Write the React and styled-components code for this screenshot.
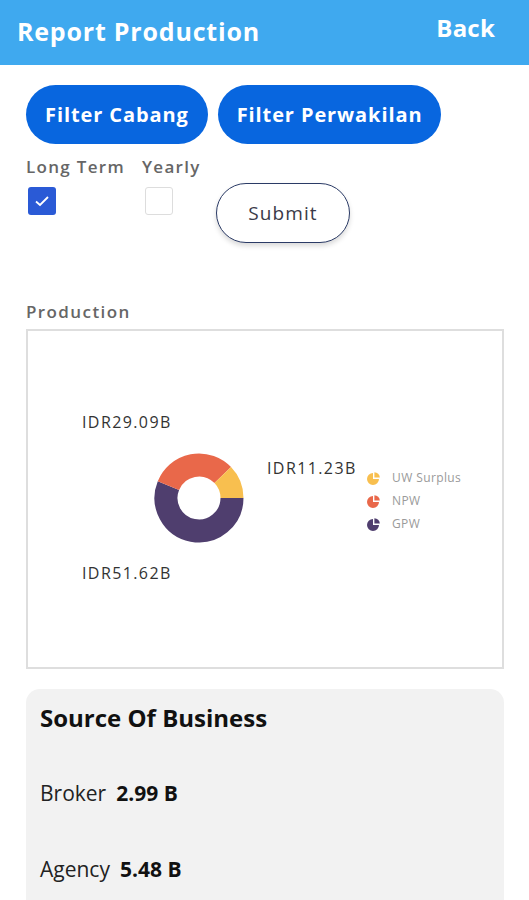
import React from 'react';
import styled, { createGlobalStyle } from 'styled-components';

const GlobalStyle = createGlobalStyle`
  body {
    margin: 0;
    background: #fff;
    font-family: 'Open Sans', 'Noto Sans', sans-serif;
  }
`;

const Page = styled.div`
  width: 529px;
  height: 900px;
  overflow: hidden;
`;

const Header = styled.header`
  display: flex;
  justify-content: space-between;
  align-items: center;
  height: 65px;
  padding: 0 34px 3px 17px;
  box-sizing: border-box;
  background-color: #3fa9ef;
  color: #fff;
  font-weight: 700;
`;

const Title = styled.span`
  font-size: 25px;
  letter-spacing: 0.8px;
`;

const Back = styled.span`
  align-self: flex-start;
  padding-top: 11px;
  font-size: 24px;
  letter-spacing: 0.2px;
`;

const Body = styled.main`
  padding: 20px 25px 0 26px;
`;

const ButtonRow = styled.div`
  display: flex;
  gap: 10px;
`;

const FilterButton = styled.button`
  height: 59px;
  padding: 0 19px;
  border: none;
  border-radius: 30px;
  background-color: #0866df;
  color: #fff;
  font-family: inherit;
  font-size: 20px;
  font-weight: 700;
  letter-spacing: 0.9px;
`;

const Options = styled.div`
  display: flex;
  align-items: flex-start;
  margin-top: 12px;
`;

const CheckGroup = styled.label`
  display: flex;
  flex-direction: column;
  width: ${(p) => p.width}px;
  color: #666;
  font-size: 17px;
  font-weight: 600;
  line-height: 22px;
  letter-spacing: 1.3px;
`;

const Box = styled.span`
  display: flex;
  align-items: center;
  justify-content: center;
  width: 28px;
  height: 28px;
  margin: 9px 0 0 ${(p) => (p.checked ? 2 : 3)}px;
  box-sizing: border-box;
  border-radius: 3px;
  background-color: ${(p) => (p.checked ? '#2a5ad6' : '#fff')};
  border: ${(p) => (p.checked ? 'none' : '1.5px solid #ddd')};
`;

const SubmitButton = styled.button`
  width: 134px;
  height: 60px;
  margin: 27px 0 0 16px;
  border: 1.5px solid #2b3b66;
  border-radius: 30px;
  background-color: #fff;
  box-shadow: 0 3px 5px rgba(0, 0, 0, 0.15);
  color: #3a3a48;
  font-family: inherit;
  font-size: 19px;
  letter-spacing: 1.1px;
`;

const SectionLabel = styled.div`
  margin-top: 58px;
  color: #666;
  font-size: 17px;
  font-weight: 600;
  line-height: 22px;
  letter-spacing: 1.4px;
`;

const ChartBox = styled.div`
  width: 478px;
  height: 340px;
  margin-top: 6px;
  box-sizing: border-box;
  border: 2px solid #dedede;

  svg {
    display: block;
  }
`;

const Card = styled.section`
  width: 478px;
  margin-top: 20px;
  padding: 14px 14px 60px;
  box-sizing: border-box;
  border-radius: 14px;
  background-color: #f2f2f2;
  color: #111;
`;

const CardTitle = styled.h2`
  margin: 0;
  font-size: 24px;
  font-weight: 700;
  line-height: 30px;
`;

const Stat = styled.div`
  display: flex;
  gap: 10px;
  margin-top: ${(p) => p.gap}px;
  font-size: 21px;
  line-height: 28px;
  color: #222;

  b {
    font-weight: 700;
    color: #111;
  }
`;

const slices = [
  { label: 'GPW', value: 51.62, color: '#4f3e6e' },
  { label: 'NPW', value: 29.09, color: '#e9684a' },
  { label: 'UW Surplus', value: 11.23, color: '#f8bf4f' },
];

const arc = (cx, cy, r, a0, a1) => {
  const x0 = cx + r * Math.cos(a0);
  const y0 = cy + r * Math.sin(a0);
  const x1 = cx + r * Math.cos(a1);
  const y1 = cy + r * Math.sin(a1);
  const large = a1 - a0 > Math.PI ? 1 : 0;
  return `M${x0} ${y0} A${r} ${r} 0 ${large} 1 ${x1} ${y1}`;
};

const PieIcon = ({ x, y, color }) => (
  <g fill={color}>
    <path d={`M${x} ${y} L${x} ${y - 6} A6 6 0 1 0 ${x + 6} ${y} Z`} />
    <path d={`M${x + 1.4} ${y - 1.4} L${x + 1.4} ${y - 6.8} A5.4 5.4 0 0 1 ${x + 6.8} ${y - 1.4} Z`} />
  </g>
);

const Donut = () => {
  const total = slices.reduce((s, d) => s + d.value, 0);
  let start = 0;
  const cx = 171;
  const cy = 167;
  return (
    <svg width="474" height="336" viewBox="0 0 474 336">
      {slices.map((d) => {
        const end = start + (d.value / total) * Math.PI * 2;
        const path = arc(cx, cy, 33, start, end);
        start = end;
        return <path key={d.label} d={path} fill="none" stroke={d.color} strokeWidth="23" />;
      })}
      <g fontFamily="'Open Sans', sans-serif" fontSize="16" fill="#333" letterSpacing="1.4">
        <text x="54" y="97">IDR29.09B</text>
        <text x="239" y="143">IDR11.23B</text>
        <text x="54" y="248">IDR51.62B</text>
      </g>
      <g fontFamily="'Open Sans', sans-serif" fontSize="12" fill="#9a9a9a" letterSpacing="0.4">
        {[...slices].reverse().map((d, i) => (
          <g key={d.label}>
            <PieIcon x={345} y={148 + i * 23} color={d.color} />
            <text x="364" y={151 + i * 23}>{d.label}</text>
          </g>
        ))}
      </g>
    </svg>
  );
};

const Check = () => (
  <svg width="16" height="12" viewBox="0 0 16 12">
    <path d="M2 6.5 L6 10 L14 2" fill="none" stroke="#fff" strokeWidth="1.8" />
  </svg>
);

export default function App() {
  return (
    <Page>
      <GlobalStyle />
      <Header>
        <Title>Report Production</Title>
        <Back>Back</Back>
      </Header>
      <Body>
        <ButtonRow>
          <FilterButton>Filter Cabang</FilterButton>
          <FilterButton>Filter Perwakilan</FilterButton>
        </ButtonRow>
        <Options>
          <CheckGroup width={116}>
            Long Term
            <Box checked>
              <Check />
            </Box>
          </CheckGroup>
          <CheckGroup width={58}>
            Yearly
            <Box />
          </CheckGroup>
          <SubmitButton>Submit</SubmitButton>
        </Options>
        <SectionLabel>Production</SectionLabel>
        <ChartBox>
          <Donut />
        </ChartBox>
        <Card>
          <CardTitle>Source Of Business</CardTitle>
          <Stat gap={46}>
            Broker <b>2.99 B</b>
          </Stat>
          <Stat gap={48}>
            Agency <b>5.48 B</b>
          </Stat>
        </Card>
      </Body>
    </Page>
  );
}
